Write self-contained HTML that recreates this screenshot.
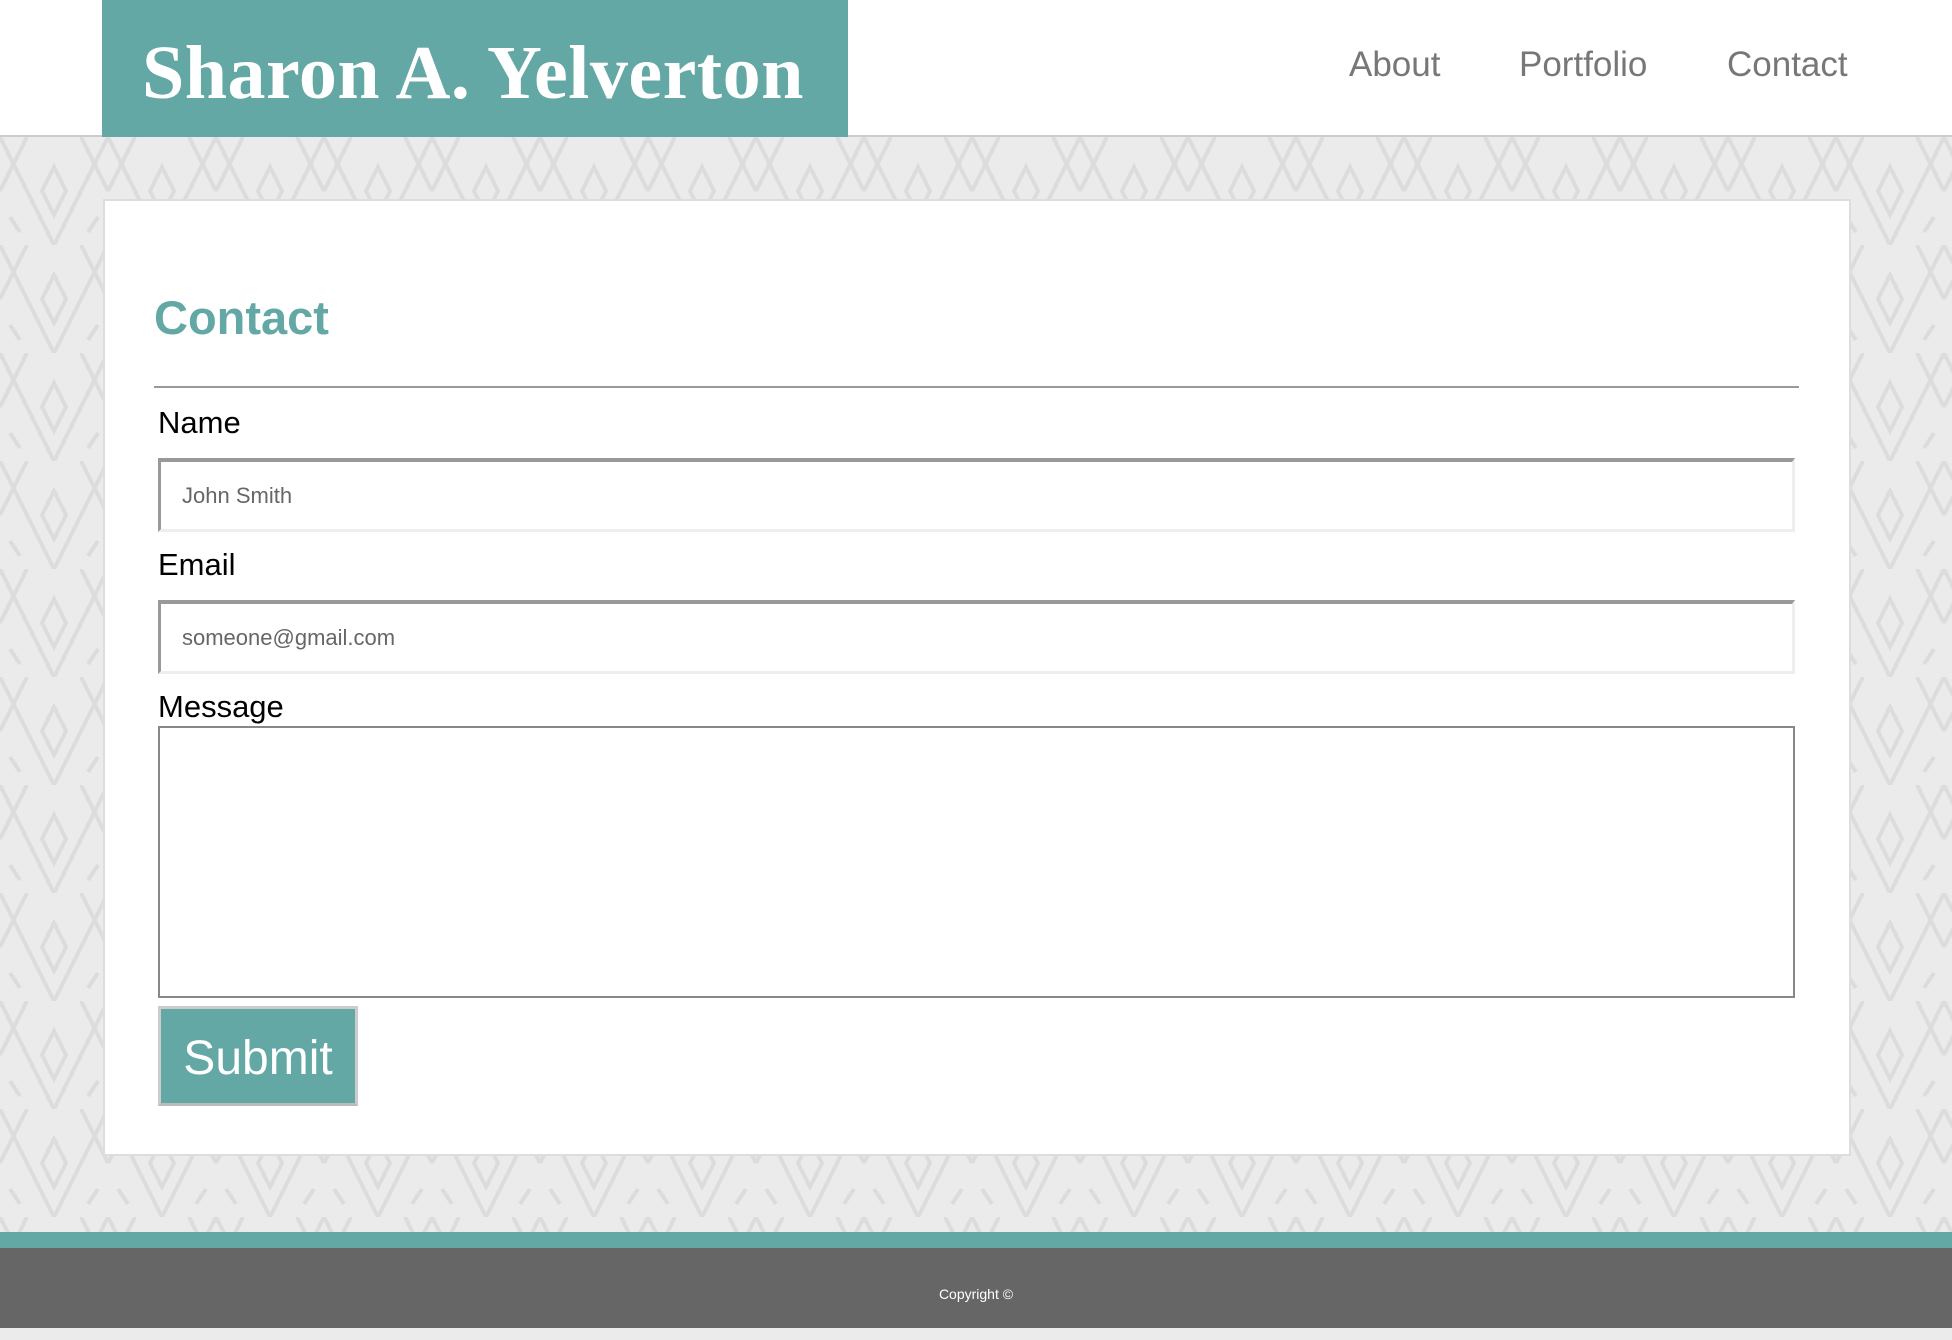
<!DOCTYPE html>
<html><head><meta charset="utf-8"><style>
*{margin:0;padding:0;box-sizing:border-box}
body{width:1952px;height:1328px;position:relative;overflow:hidden;background:#ebebeb;font-family:"Liberation Sans",Arial,sans-serif}
.bg{position:absolute;left:0;top:137px;width:1952px;height:1095px}
header{position:absolute;left:0;top:0;width:1952px;height:137px;background:#fff;border-bottom:2px solid #ccc}
.logo{position:absolute;left:102px;top:0;width:746px;height:137px;background:#63a8a5;color:#fff;font-family:"Liberation Serif",Georgia,serif;font-weight:bold;font-size:76px;line-height:146px;padding-left:40px;white-space:nowrap;letter-spacing:0.5px}
nav a{position:absolute;top:45px;font-size:35px;color:#777;text-decoration:none;line-height:40px}
.card{position:absolute;left:103px;top:199px;width:1748px;height:957px;background:#fff;border:2px solid #ddd}
h1{position:absolute;left:154px;top:290px;color:#63a8a5;font-size:47px;font-weight:bold;line-height:56px}
.hr{position:absolute;left:154px;top:386px;width:1645px;height:2px;background:#999}
label{position:absolute;left:158px;font-size:31px;color:#000;line-height:36px}
.inp{position:absolute;left:158px;width:1637px;height:74px;border-top:4px solid #999;border-left:3px solid #999;border-bottom:3px solid #eee;border-right:3px solid #eee;background:#fff;font-size:22px;color:#666;padding-left:21px;line-height:68px}
.ta{position:absolute;left:158px;top:726px;width:1637px;height:272px;border:2px solid #888;background:#fff}
.btn{position:absolute;left:158px;top:1006px;width:200px;height:100px;background:#63a8a5;border:3px solid #ccc;border-bottom-color:#bbb;color:#fff;font-size:48px;line-height:100px;text-align:center}
.ft1{position:absolute;left:0;top:1232px;width:1952px;height:16px;background:#63a8a5}
.ft2{position:absolute;left:0;top:1248px;width:1952px;height:80px;background:#666;color:#fff;font-size:14px;text-align:center;line-height:92px}
</style></head><body>
<svg class="bg" width="1952" height="1095" xmlns="http://www.w3.org/2000/svg">
<defs><pattern id="p" width="108" height="108" patternUnits="userSpaceOnUse">
<g fill="none" stroke="#dcdcdc" stroke-width="4">
<path d="M0 0 L54 108 M108 0 L54 108 M27 0 L0 54 M81 0 L108 54"/>
<path d="M54 30 L66 54 L54 78 L42 54 Z"/>
<path d="M10 80 L20 95 M98 80 L88 95"/>
</g></pattern></defs>
<rect width="1952" height="1095" fill="url(#p)"/>
</svg>
<header>
<div class="logo">Sharon A. Yelverton</div>
<nav><a style="left:1349px">About</a><a style="left:1519px">Portfolio</a><a style="left:1727px">Contact</a></nav>
</header>
<div class="card"></div>
<h1>Contact</h1>
<div class="hr"></div>
<label style="top:405px">Name</label>
<div class="inp" style="top:458px">John Smith</div>
<label style="top:547px">Email</label>
<div class="inp" style="top:600px">someone@gmail.com</div>
<label style="top:689px">Message</label>
<div class="ta"></div>
<div class="btn">Submit</div>
<div class="ft1"></div>
<div class="ft2">Copyright ©</div>
</body></html>
